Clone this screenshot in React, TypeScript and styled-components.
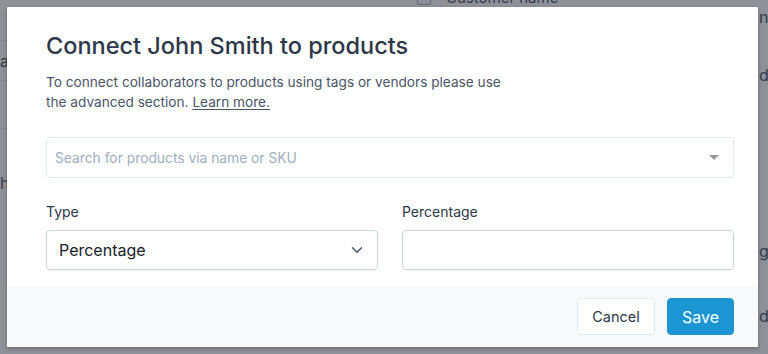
import styled, { createGlobalStyle } from 'styled-components'

const GlobalStyle = createGlobalStyle`
  html, body {
    margin: 0;
    padding: 0;
    height: 100%;
    overflow: hidden;
    font-family: Inter, "Noto Sans", sans-serif;
  }
  * { box-sizing: border-box; }
`

const Page = styled.div`
  position: relative;
  width: 768px;
  height: 354px;
  background: #ffffff;
  color: #2d3748;
  font-size: 14px;
  display: flex;
  justify-content: space-between;
`

const PageEdge = styled.div`
  width: 9px;
  overflow: hidden;
  display: flex;
  flex-direction: column;
`

const PageHeader = styled.div`
  position: absolute;
  top: -12px;
  left: 417px;
  display: flex;
  align-items: center;
  gap: 15px;
  font-size: 15px;
  color: #4a5568;
`

const Checkbox = styled.span`
  width: 14px;
  height: 14px;
  border: 1px solid #a0aec0;
  border-radius: 3px;
  background: #fff;
`

const EdgeRow = styled.div<{ $h: number; $align?: string }>`
  height: ${({ $h }) => $h}px;
  flex: none;
  border-bottom: ${({ $align }) => ($align === 'right' ? '1px solid #e2e8f0' : 'none')};
  display: flex;
  align-items: center;
  justify-content: ${({ $align }) => ($align === 'right' ? 'flex-end' : 'flex-start')};
  white-space: nowrap;
  font-size: 16px;
  color: #4a5568;
`

const Overlay = styled.div`
  position: absolute;
  inset: 0;
  background: rgba(30, 35, 48, 0.5);
  display: flex;
  align-items: flex-start;
  padding: 7px 10px 0 7px;
`

const Modal = styled.div`
  width: 751px;
  background: #ffffff;
  border-radius: 1px;
  box-shadow: 0 2px 4px rgba(0, 0, 0, 0.25);
  overflow: hidden;
`

const Body = styled.div`
  padding: 23px 24px 16px 39px;
`

const Title = styled.h1`
  margin: 0;
  font-size: 23.5px;
  line-height: 32px;
  font-weight: 500;
  color: #2d3748;
`

const Description = styled.p`
  margin: 10px 0 0;
  width: 470px;
  font-size: 13.65px;
  line-height: 20px;
  color: #4a5568;
`

const LearnMore = styled.a`
  color: #4a5568;
  text-decoration: underline;
  text-underline-offset: 2px;
`

const SearchBox = styled.div`
  margin-top: 25px;
  height: 41px;
  border: 1px solid #e2e8f0;
  border-radius: 4px;
  display: flex;
  align-items: center;
  justify-content: space-between;
  padding: 0 14px 0 8px;
`

const Placeholder = styled.span`
  font-size: 13.8px;
  color: #a0aec0;
`

const Caret = styled.span`
  width: 0;
  height: 0;
  border-left: 5px solid transparent;
  border-right: 5px solid transparent;
  border-top: 5px solid #999999;
`

const FieldRow = styled.div`
  margin-top: 24px;
  display: grid;
  grid-template-columns: 1fr 1fr;
  gap: 24px;
`

const Field = styled.div`
  display: flex;
  flex-direction: column;
  gap: 8px;
`

const Label = styled.label`
  font-size: 14px;
  line-height: 20px;
  color: #2d3748;
`

const Control = styled.div`
  height: 40px;
  border: 1px solid #cbd5e0;
  border-radius: 4px;
  box-shadow: 0 1px 2px rgba(0, 0, 0, 0.06);
  display: flex;
  align-items: center;
  justify-content: space-between;
  padding: 0 14px 0 12px;
  font-size: 16px;
  color: #1a202c;
`

const Footer = styled.div`
  height: 61px;
  background: #f7f9fb;
  display: flex;
  align-items: center;
  justify-content: flex-end;
  gap: 12px;
  padding: 0 24px;
`

const Button = styled.button<{ $primary?: boolean }>`
  height: 37px;
  width: ${({ $primary }) => ($primary ? '67px' : '78px')};
  padding: 0;
  border-radius: 4px;
  font-family: inherit;
  font-size: ${({ $primary }) => ($primary ? '16px' : '14.5px')};
  font-weight: 400;
  border: 1px solid ${({ $primary }) => ($primary ? '#1b96d3' : '#e2e8f0')};
  background: ${({ $primary }) => ($primary ? '#1b96d3' : '#ffffff')};
  color: ${({ $primary }) => ($primary ? '#ffffff' : '#2d3748')};
`

const Chevron = () => (
  <svg width="12" height="8" viewBox="0 0 12 8" fill="none">
    <path d="M1.5 1.75 6 6.25l4.5-4.5" stroke="#4a5568" strokeWidth="1.4" strokeLinecap="round" strokeLinejoin="round" />
  </svg>
)

export default function App() {
  return (
    <>
      <GlobalStyle />
      <Page>
        <PageEdge>
          <EdgeRow $h={41} $align="right" />
          <EdgeRow $h={40} $align="right">
            ta
          </EdgeRow>
          <EdgeRow $h={48} $align="right" />
          <EdgeRow $h={108}>h</EdgeRow>
        </PageEdge>
        <PageHeader>
          <Checkbox />
          Customer name
        </PageHeader>
        <PageEdge>
          <EdgeRow $h={34}>n</EdgeRow>
          <EdgeRow $h={82}>do</EdgeRow>
          <EdgeRow $h={125} />
          <EdgeRow $h={20}>g</EdgeRow>
          <EdgeRow $h={110}>d</EdgeRow>
        </PageEdge>
        <Overlay>
          <Modal>
            <Body>
              <Title>Connect John Smith to products</Title>
              <Description>
                To connect collaborators to products using tags or vendors please use the advanced section.{' '}
                <LearnMore>Learn more.</LearnMore>
              </Description>
              <SearchBox>
                <Placeholder>Search for products via name or SKU</Placeholder>
                <Caret />
              </SearchBox>
              <FieldRow>
                <Field>
                  <Label>Type</Label>
                  <Control>
                    Percentage
                    <Chevron />
                  </Control>
                </Field>
                <Field>
                  <Label>Percentage</Label>
                  <Control />
                </Field>
              </FieldRow>
            </Body>
            <Footer>
              <Button>Cancel</Button>
              <Button $primary>Save</Button>
            </Footer>
          </Modal>
        </Overlay>
      </Page>
    </>
  )
}
